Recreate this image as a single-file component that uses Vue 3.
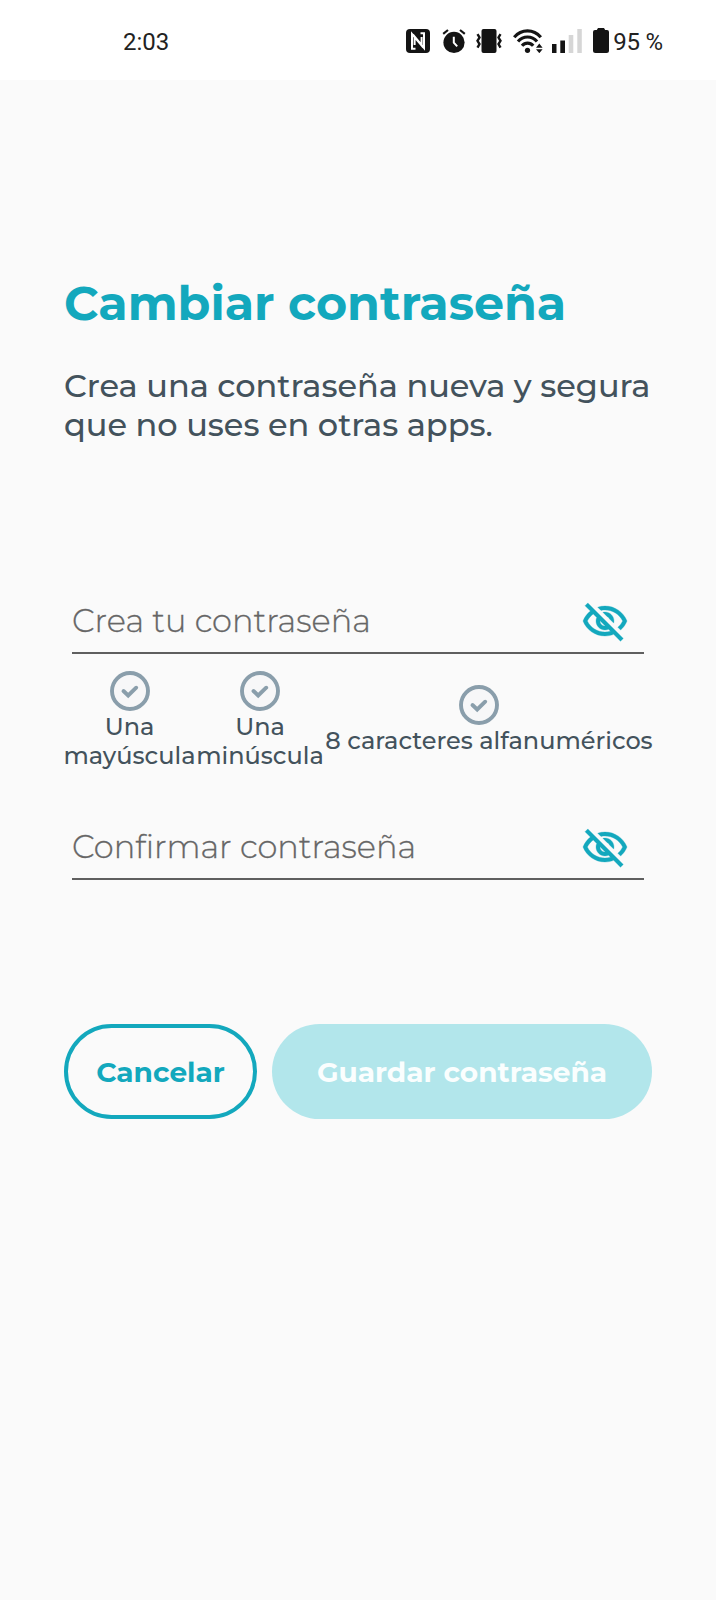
<template>
  <div class="screen">
    <header class="status-bar">
      <span class="status-bar__time">2:03</span>
      <div class="status-bar__icons">
        <!-- NFC -->
        <svg class="icon-nfc" viewBox="0 0 24 24" aria-hidden="true">
          <rect width="24" height="24" rx="4" fill="#141414" />
          <path d="M9.500 19.800H6V5l9.600 11.500V8M14.500 4.200H18V19L8.600 7.500v8.500" fill="none" stroke="#fff" stroke-width="2" />
        </svg>
        <!-- Alarm -->
        <svg class="icon-alarm" viewBox="0 0 24 24" aria-hidden="true">
          <circle cx="12" cy="13.400" r="10.600" fill="#141414" />
          <path d="M1.200 4.800 6 1M22.800 4.800 18 1" fill="none" stroke="#141414" stroke-width="2.200" />
          <path d="M11.800 7.800v5.800l3.400 3.800" fill="none" stroke="#fff" stroke-width="2" />
        </svg>
        <!-- Vibrate -->
        <svg class="icon-vibrate" viewBox="0 0 26 24" aria-hidden="true">
          <rect x="5.5" y="0" width="15" height="24" rx="2" fill="#141414" />
          <path
            d="M1.500 5.200 3.500 8.500 1.500 11.800l2 3.300-2 3.500M24.500 5.200l-2 3.300 2 3.300-2 3.300 2 3.500"
            fill="none"
            stroke="#141414"
            stroke-width="2.400"
          />
        </svg>
        <!-- Wi-Fi with traffic arrows -->
        <svg class="icon-wifi" viewBox="0 0 30 24" aria-hidden="true">
          <g fill="none" stroke="#141414" stroke-width="3.200">
            <path d="M1.200 8.200C8.500-.2 20.500-.2 27.800 8.200" />
            <path d="M5 12.500c5.200-6 13.800-6 19 0" />
            <path d="M9 16.800c3.200-3.700 8-3.700 11.200 0" />
          </g>
          <circle cx="14.500" cy="21.300" r="2.600" fill="#141414" />
          <path d="M23 18.800 26.300 14.500l3.300 4.300zM23 20.300h6.600L26.300 24.200z" fill="#141414" />
        </svg>
        <!-- Mobile signal -->
        <svg class="icon-signal" viewBox="0 0 30 24" aria-hidden="true">
          <path d="M0 15h4.500v9H0zM8.300 11.500h4.700V24H8.300z" fill="#141414" />
          <path d="M16.700 6h4.600v18h-4.600zM25.300 0h4.500v24h-4.500z" fill="#d6d6d6" />
        </svg>
        <!-- Battery -->
        <svg class="icon-battery" viewBox="0 0 16 25" aria-hidden="true">
          <path d="M5 0h6l1.200 2H14a2 2 0 0 1 2 2v18.500a2.500 2.500 0 0 1-2.500 2.500h-11A2.500 2.500 0 0 1 0 22.500V4a2 2 0 0 1 2-2h1.800z" fill="#141414" />
        </svg>
        <span class="status-bar__battery">95 %</span>
      </div>
    </header>

    <main class="content">
      <h1 class="title">Cambiar contraseña</h1>
      <p class="intro">Crea una contraseña nueva y segura<br />que no uses en otras apps.</p>

      <form class="form" @submit.prevent>
        <div v-for="field in fields" :key="field.id" class="form__group">
          <div class="field">
            <input
              :id="field.id"
              v-model="field.value"
              class="field__input"
              :type="field.visible ? 'text' : 'password'"
              :placeholder="field.placeholder"
            />
            <button type="button" class="field__toggle" aria-label="Mostrar u ocultar" @click="field.visible = !field.visible">
              <svg viewBox="0 0 24 24" aria-hidden="true">
                <path
                  d="M12 6c3.790 0 7.170 2.130 8.820 5.500-.59 1.220-1.420 2.270-2.410 3.120l1.410 1.410c1.390-1.230 2.490-2.770 3.180-4.530C21.270 7.110 17 4 12 4c-1.270 0-2.490.2-3.640.57l1.650 1.650C10.660 6.090 11.320 6 12 6zm-1.070 1.140L13 9.210c.57.25 1.030.71 1.280 1.280l2.070 2.070c.08-.34.14-.7.14-1.070C16.500 9.010 14.480 7 12 7c-.37 0-.72.05-1.070.14zM2.010 3.870l2.680 2.680C3.060 7.830 1.770 9.530 1 11.500 2.730 15.890 7 19 12 19c1.520 0 2.980-.29 4.320-.82l3.420 3.420 1.410-1.410L3.420 2.450 2.010 3.870zm7.500 7.500l2.610 2.610c-.04.01-.08.02-.12.02-1.380 0-2.500-1.120-2.500-2.500 0-.05.01-.08.01-.13zm-3.400-3.400l1.750 1.750c-.23.55-.36 1.150-.36 1.780 0 2.480 2.020 4.500 4.500 4.500.63 0 1.230-.13 1.770-.36l.98.98c-.88.24-1.800.38-2.750.38-3.790 0-7.170-2.130-8.820-5.500.7-1.430 1.720-2.610 2.930-3.530z"
                  fill="currentColor"
                  stroke="currentColor"
                  stroke-width="0.15"
                />
              </svg>
            </button>
          </div>

          <ul v-if="field.id === 'password'" class="rules">
            <li v-for="rule in rules" :key="rule.id" class="rule" :class="`rule--${rule.id}`">
              <svg class="rule__icon" viewBox="0 0 40 40" aria-hidden="true">
                <circle cx="20" cy="20" r="18" />
                <path d="m13.500 20 4.700 4.500 8-7.800" />
              </svg>
              <span v-for="line in rule.lines" :key="line" class="rule__line">{{ line }}</span>
            </li>
          </ul>
        </div>

        <div class="actions">
          <button type="button" class="btn btn--outline">Cancelar</button>
          <button type="submit" class="btn btn--primary" disabled>Guardar contraseña</button>
        </div>
      </form>
    </main>
  </div>
</template>

<script setup>
import { reactive } from "vue";

const fields = reactive([
  { id: "password", placeholder: "Crea tu contraseña", value: "", visible: false },
  { id: "confirm", placeholder: "Confirmar contraseña", value: "", visible: false },
]);

const rules = [
  { id: "upper", lines: ["Una", "mayúscula"] },
  { id: "lower", lines: ["Una", "minúscula"] },
  { id: "length", lines: ["8 caracteres alfanuméricos"] },
];
</script>

<style>
body {
  background: #fafafa;
}
</style>

<style scoped>
.screen {
  box-sizing: border-box;
  width: 716px;
  height: 1600px;
  background: #fafafa;
  color: #43525c;
  font-family: Montserrat, Inter, sans-serif;
  overflow: hidden;
}

.status-bar {
  box-sizing: border-box;
  display: flex;
  align-items: center;
  justify-content: space-between;
  height: 80px;
  padding: 1px 53px 0 123px;
  background: #fff;
  color: #222;
  font-family: Roboto, sans-serif;
  font-size: 24px;
}

.status-bar__time {
  padding-top: 2px;
}

.status-bar__icons {
  display: flex;
  align-items: center;
}

.icon-nfc {
  width: 24px;
  height: 24px;
}

.icon-alarm {
  width: 24px;
  height: 24px;
  margin-left: 12px;
}

.icon-vibrate {
  width: 26px;
  height: 24px;
  margin-left: 10px;
}

.icon-wifi {
  width: 30px;
  height: 24px;
  margin-left: 11px;
}

.icon-signal {
  width: 30px;
  height: 24px;
  margin-left: 9px;
}

.icon-battery {
  width: 16px;
  height: 25px;
  margin-left: 11px;
}

.status-bar__battery {
  margin-left: 4px;
  padding-top: 2px;
  letter-spacing: -0.2px;
}

.content {
  padding: 193px 64px 0;
}

.title {
  margin: 0;
  color: #13a8bd;
  font-size: 47.6px;
  font-weight: 700;
  line-height: 60px;
  white-space: nowrap;
}

.intro {
  margin: 34px 0 0;
  font-size: 32px;
  font-weight: 500;
  line-height: 38.5px;
  letter-spacing: -0.03px;
  white-space: nowrap;
}

.form {
  margin-top: 147px;
}

.field {
  display: flex;
  align-items: center;
  box-sizing: border-box;
  height: 63px;
  margin: 0 8px;
  padding-right: 15px;
  border-bottom: 2px solid #5f5f5f;
}

.field__input {
  flex: 1;
  min-width: 0;
  height: 48px;
  padding: 0 0 2px;
  box-sizing: border-box;
  border: 0;
  outline: 0;
  background: transparent;
  color: #43525c;
  font-family: inherit;
  font-size: 32px;
  font-weight: 300;
}

.field__input::placeholder {
  color: #666;
  opacity: 1;
  -webkit-text-stroke: 0.3px #666;
}

.field__toggle {
  flex: none;
  width: 48px;
  height: 48px;
  padding: 0;
  border: 0;
  background: none;
  color: #13a8bd;
}

.field__toggle svg {
  display: block;
}

.rules {
  display: grid;
  grid-template-columns: 131px 130px 328px;
  align-items: center;
  height: 100px;
  margin: 16px -1px 47px 0;
  padding: 0;
  list-style: none;
}

.rule {
  display: flex;
  flex-direction: column;
  align-items: center;
  font-size: 24px;
  font-weight: 500;
  line-height: 29px;
  white-space: nowrap;
}

.rule__icon {
  width: 40px;
  height: 40px;
  margin-bottom: 1px;
  fill: none;
  stroke: #8a9eab;
  stroke-width: 3.9;
  stroke-linecap: round;
}

.rule--length .rule__icon {
  margin-right: 21px;
}

.rule__icon circle {
  fill: #f7f7f8;
}

.actions {
  display: flex;
  gap: 15px;
  margin-top: 144px;
}

.btn {
  box-sizing: border-box;
  height: 95px;
  padding: 0;
  border: 0;
  border-radius: 48px;
  font-family: inherit;
  font-size: 28px;
  font-weight: 700;
  white-space: nowrap;
}

.btn--outline {
  width: 193px;
  border: 4px solid #13a8bd;
  background: transparent;
  color: #13a8bd;
}

.btn--primary {
  flex: 1;
  background: #b2e6eb;
  color: #fafefe;
}
</style>
